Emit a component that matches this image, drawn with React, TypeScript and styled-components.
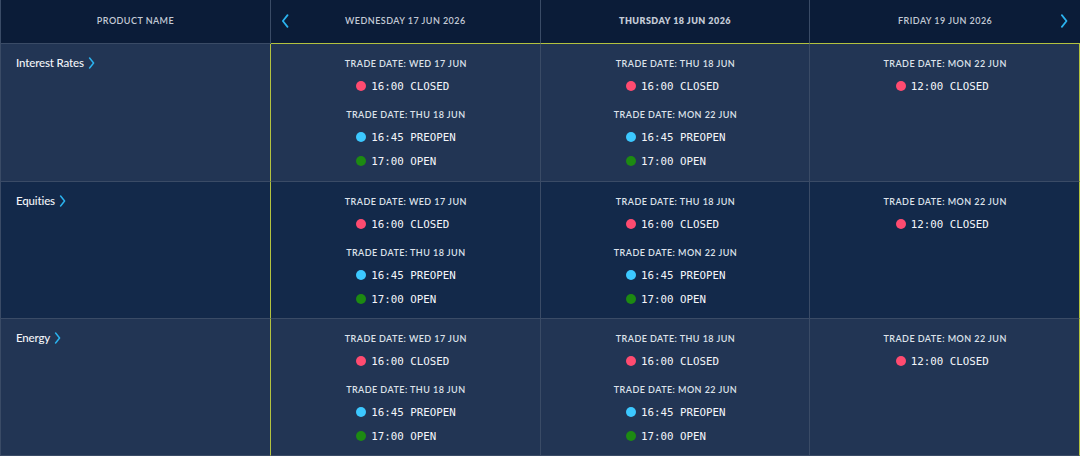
import React from 'react';
import styled, { createGlobalStyle } from 'styled-components';

const GlobalStyle = createGlobalStyle`
  html, body {
    margin: 0;
    padding: 0;
    background: #0b1c38;
  }
  body {
    font-family: Lato, "Noto Sans", sans-serif;
    overflow: hidden;
  }
`;

const GRID = '#3a4b66';
const HIGHLIGHT = '#b3c23f';

const Board = styled.div`
  display: grid;
  grid-template-columns: 270px repeat(3, 1fr);
  grid-template-rows: 44px 138px 137px 137px;
  width: 1080px;
  border-left: 1px solid ${GRID};
  box-sizing: border-box;
`;

const HeaderCell = styled.div<{ $last?: boolean; $highlight?: boolean }>`
  position: relative;
  display: flex;
  align-items: center;
  justify-content: center;
  background: #0b1c38;
  border-bottom: 1px solid ${(p) => (p.$highlight ? HIGHLIGHT : GRID)};
  border-right: ${(p) => (p.$last ? 'none' : `1px solid ${GRID}`)};
  box-sizing: border-box;
  padding-bottom: 3px;
`;

const HeaderText = styled.span<{ $bold?: boolean }>`
  font-size: 9px;
  letter-spacing: 0.45px;
  color: #c3cad6;
  font-weight: ${(p) => (p.$bold ? 800 : 600)};
  text-transform: uppercase;
`;

const NavButton = styled.button<{ $side: 'left' | 'right' }>`
  position: absolute;
  top: 13px;
  ${(p) => (p.$side === 'left' ? 'left: 8px;' : 'right: 10px;')}
  width: 12px;
  height: 16px;
  padding: 0;
  border: none;
  background: none;
  cursor: pointer;
  display: flex;
  align-items: center;
  justify-content: center;
`;

const ProductCell = styled.div<{ $alt: boolean }>`
  background: ${(p) => (p.$alt ? '#13294a' : '#223554')};
  border-right: 1px solid ${GRID};
  border-bottom: 1px solid ${GRID};
  box-sizing: border-box;
  padding: 7px 0 0 15px;
`;

const ProductLink = styled.a`
  display: inline-flex;
  align-items: center;
  gap: 4px;
  color: #f2f4f8;
  font-size: 11.5px;
  font-weight: 500;
  letter-spacing: -0.15px;
  text-decoration: none;
  cursor: pointer;
`;

const DayCell = styled.div<{ $alt: boolean; $first: boolean; $last: boolean }>`
  background: ${(p) => (p.$alt ? '#13294a' : '#223554')};
  border-bottom: 1px solid ${GRID};
  border-right: 1px solid ${(p) => (p.$last ? HIGHLIGHT : GRID)};
  border-left: ${(p) => (p.$first ? `1px solid ${HIGHLIGHT}` : 'none')};
  margin-left: ${(p) => (p.$first ? '-1px' : '0')};
  box-sizing: border-box;
  display: flex;
  flex-direction: column;
  align-items: center;
  padding-top: 14px;
`;

const TradeGroup = styled.div`
  display: flex;
  flex-direction: column;
  align-items: center;
  margin-bottom: 16px;
`;

const TradeLabel = styled.div`
  font-size: 9px;
  font-weight: 600;
  letter-spacing: 0.45px;
  color: #dde2ea;
  line-height: 11px;
  margin-bottom: 11px;
  margin-left: 1px;
`;

const SessionList = styled.div`
  width: 98px;
  display: flex;
  flex-direction: column;
  gap: 11px;
`;

const Session = styled.div`
  display: flex;
  align-items: center;
  height: 13px;
`;

const Dot = styled.span<{ $color: string }>`
  flex: none;
  width: 10px;
  height: 10px;
  border-radius: 50%;
  background: ${(p) => p.$color};
  margin-right: 5px;
  margin-top: -2px;
`;

const SessionText = styled.span`
  font-family: "DejaVu Sans Mono", "Liberation Mono", monospace;
  font-size: 10.8px;
  letter-spacing: 0px;
  color: #f4f6fa;
  white-space: nowrap;
`;

const STATUS_COLORS: Record<string, string> = {
  CLOSED: '#ff4b70',
  PREOPEN: '#3cc8ff',
  OPEN: '#1d8a12',
};

type Trade = { date: string; sessions: [string, string][] };

const Chevron = ({ left, size = 12 }: { left?: boolean; size?: number }) => (
  <svg width={size * 0.6} height={size} viewBox="0 0 6 12" fill="none">
    <path
      d={left ? 'M5 1 L1 6 L5 11' : 'M1 1 L5 6 L1 11'}
      stroke="#2bb3ef"
      strokeWidth="1.5"
      strokeLinecap="round"
      strokeLinejoin="round"
    />
  </svg>
);

const days = [
  { label: 'Wednesday 17 Jun 2026', bold: false },
  { label: 'Thursday 18 Jun 2026', bold: true },
  { label: 'Friday 19 Jun 2026', bold: false },
];

const dayTrades: Trade[][] = [
  [
    { date: 'WED 17 JUN', sessions: [['16:00', 'CLOSED']] },
    { date: 'THU 18 JUN', sessions: [['16:45', 'PREOPEN'], ['17:00', 'OPEN']] },
  ],
  [
    { date: 'THU 18 JUN', sessions: [['16:00', 'CLOSED']] },
    { date: 'MON 22 JUN', sessions: [['16:45', 'PREOPEN'], ['17:00', 'OPEN']] },
  ],
  [{ date: 'MON 22 JUN', sessions: [['12:00', 'CLOSED']] }],
];

const products = ['Interest Rates', 'Equities', 'Energy'];

export default function App(): React.ReactElement {
  return (
    <>
      <GlobalStyle />
      <Board>
        <HeaderCell>
          <HeaderText>Product Name</HeaderText>
        </HeaderCell>
        {days.map((day, i) => (
          <HeaderCell key={day.label} $highlight $last={i === days.length - 1}>
            {i === 0 && (
              <NavButton $side="left" aria-label="previous day">
                <Chevron left size={14} />
              </NavButton>
            )}
            <HeaderText $bold={day.bold}>{day.label}</HeaderText>
            {i === days.length - 1 && (
              <NavButton $side="right" aria-label="next day">
                <Chevron size={14} />
              </NavButton>
            )}
          </HeaderCell>
        ))}
        {products.map((product, row) => (
          <React.Fragment key={product}>
            <ProductCell $alt={row % 2 === 1}>
              <ProductLink>
                {product}
                <Chevron size={12} />
              </ProductLink>
            </ProductCell>
            {dayTrades.map((trades, col) => (
              <DayCell
                key={col}
                $alt={row % 2 === 1}
                $first={col === 0}
                $last={col === dayTrades.length - 1}
              >
                {trades.map((trade) => (
                  <TradeGroup key={trade.date}>
                    <TradeLabel>TRADE DATE: {trade.date}</TradeLabel>
                    <SessionList>
                      {trade.sessions.map(([time, status]) => (
                        <Session key={time}>
                          <Dot $color={STATUS_COLORS[status]} />
                          <SessionText>
                            {time} {status}
                          </SessionText>
                        </Session>
                      ))}
                    </SessionList>
                  </TradeGroup>
                ))}
              </DayCell>
            ))}
          </React.Fragment>
        ))}
      </Board>
    </>
  );
}
